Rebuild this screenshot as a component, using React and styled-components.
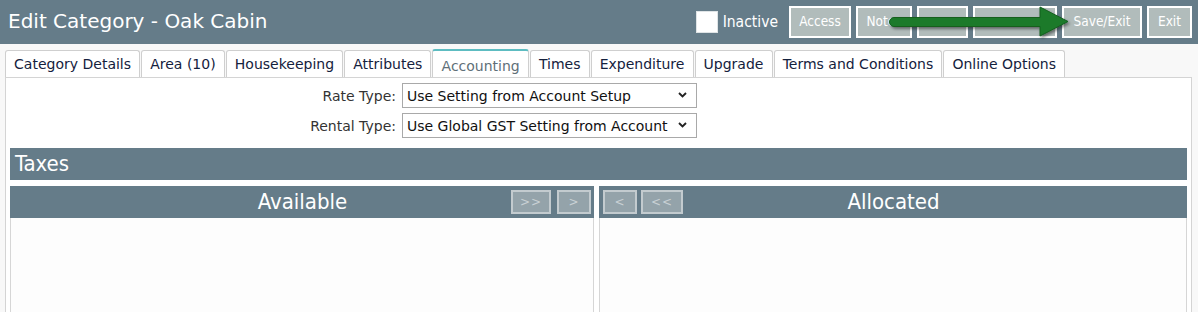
import React from "react";
import styled, { createGlobalStyle } from "styled-components";

const Global = createGlobalStyle`
  html, body { margin: 0; padding: 0; background: #f8f8f8; }
  body { font-family: "DejaVu Sans", Verdana, sans-serif; overflow: hidden; }
  * { box-sizing: border-box; }
`;

const Page = styled.div`
  width: 1198px;
  height: 312px;
  overflow: hidden;
`;

const Header = styled.header`
  position: relative;
  height: 44px;
  background: #657c89;
  display: flex;
  align-items: center;
  padding: 0 6px 0 8px;
`;

const Title = styled.h1`
  flex: 1;
  margin: 0;
  font-size: 20px;
  font-weight: normal;
  color: #fff;
  padding-bottom: 2px;
`;

const CheckLabel = styled.label`
  display: flex;
  align-items: center;
  gap: 5px;
  color: #fff;
  font-family: "DejaVu Sans Condensed", Tahoma, sans-serif;
  font-size: 15.5px;
  margin-right: 11px;
`;

const Box = styled.span`
  width: 22px;
  height: 22px;
  background: #fff;
  border: 1px solid #dfe4e6;
`;

const HeadButtons = styled.div`
  display: flex;
  gap: 5px;
`;

const HeadButton = styled.button`
  width: ${(p) => p.$w}px;
  height: 32px;
  background: #b1bcbb;
  border: 2px solid #fff;
  color: #fff;
  font-family: "DejaVu Sans Condensed", Tahoma, sans-serif;
  font-size: 13.5px;
  padding: 0 0 3px;
`;

const Arrow = styled.svg`
  position: absolute;
  left: 884px;
  top: 4px;
`;

const TabStrip = styled.nav`
  display: flex;
  align-items: flex-end;
  height: 33px;
  padding-left: 5px;
`;

const Tab = styled.div`
  height: ${(p) => (p.$active ? 28 : 27)}px;
  padding: ${(p) => (p.$active ? "7px 8.1px 0" : "5px 8.1px 0")};
  margin-right: 1px;
  background: #fff;
  border: 1px solid #cfcfcf;
  border-bottom: none;
  border-top: ${(p) => (p.$active ? "2px solid #5dbcc1" : "1px solid #cfcfcf")};
  border-radius: 3px 3px 0 0;
  font-size: 14px;
  color: ${(p) => (p.$active ? "#5f6f78" : "#14213d")};
  white-space: nowrap;
`;

const Content = styled.main`
  margin: 0 6px 0 5px;
  background: #fff;
  border: 1px solid #d4d4d4;
  padding: 5px 4px 0;
  height: 240px;
`;

const Form = styled.div`
  display: grid;
  grid-template-columns: 386px 295px;
  column-gap: 6px;
  row-gap: 5px;
  align-items: center;
`;

const Label = styled.span`
  text-align: right;
  font-size: 14px;
  color: #333;
`;

const SelectWrap = styled.div`
  position: relative;
  height: 25px;
`;

const Select = styled.select`
  appearance: none;
  width: 100%;
  height: 25px;
  border: 1px solid #a9a9a9;
  border-radius: 0;
  background: #fff;
  font-family: "DejaVu Sans", Verdana, sans-serif;
  font-size: 14px;
  color: #111;
  padding: 0 25px 0 4px;
`;

const Chevron = styled.svg`
  position: absolute;
  right: 10px;
  top: 9px;
  pointer-events: none;
`;

const SectionBar = styled.div`
  margin-top: 10px;
  height: 32px;
  background: #657c89;
  color: #fff;
  font-family: "DejaVu Sans Condensed", Tahoma, sans-serif;
  font-size: 22px;
  display: flex;
  align-items: center;
  padding: 0 0 2px 5px;
`;

const Columns = styled.div`
  margin-top: 6px;
  display: grid;
  grid-template-columns: 584px 588px;
  column-gap: 5px;
`;

const Panel = styled.section`
  display: flex;
  flex-direction: column;
`;

const PanelHead = styled.div`
  height: 32px;
  background: #657c89;
  display: grid;
  grid-template-columns: 1fr auto 1fr;
  align-items: center;
  padding: 0 3px 0 4px;
`;

const PanelTitle = styled.div`
  grid-column: 2;
  color: #fff;
  font-family: "DejaVu Sans Condensed", Tahoma, sans-serif;
  font-size: 22px;
  padding-bottom: 2px;
`;

const MoveGroup = styled.div`
  grid-column: ${(p) => p.$col};
  grid-row: 1;
  justify-self: ${(p) => (p.$col === 3 ? "end" : "start")};
  display: flex;
  gap: ${(p) => p.$gap}px;
`;

const MoveButton = styled.button`
  width: ${(p) => p.$w}px;
  height: 24px;
  background: #94a3aa;
  border: 2px solid #c3cbcf;
  color: #c9d1d5;
  font-family: "DejaVu Sans", sans-serif;
  font-size: 12px;
  padding: 0;
  letter-spacing: 1px;
`;

const PanelBody = styled.div`
  height: 100px;
  background: #fdfdfd;
  border: 1px solid #d6d6d6;
  border-top: none;
`;

const tabs = [
  "Category Details",
  "Area (10)",
  "Housekeeping",
  "Attributes",
  "Accounting",
  "Times",
  "Expenditure",
  "Upgrade",
  "Terms and Conditions",
  "Online Options",
];

function Dropdown({ value }) {
  return (
    <SelectWrap>
      <Select defaultValue={value}>
        <option>{value}</option>
      </Select>
      <Chevron width="9" height="6" viewBox="0 0 9 6">
        <path d="M1 1l3.5 3.5L8 1" fill="none" stroke="#222" strokeWidth="1.9" />
      </Chevron>
    </SelectWrap>
  );
}

export default function App() {
  return (
    <Page>
      <Global />
      <Header>
        <Title>Edit Category - Oak Cabin</Title>
        <CheckLabel>
          <Box />
          Inactive
        </CheckLabel>
        <HeadButtons>
          <HeadButton $w={62}>Access</HeadButton>
          <HeadButton $w={56}>Notes</HeadButton>
          <HeadButton $w={51}>{"\u00a0"}</HeadButton>
          <HeadButton $w={84}>{"\u00a0"}</HeadButton>
          <HeadButton $w={80}>Save/Exit</HeadButton>
          <HeadButton $w={45}>Exit</HeadButton>
        </HeadButtons>
        <Arrow width="190" height="38" viewBox="0 0 190 38">
          <defs>
            <filter id="sh" x="-10%" y="-30%" width="120%" height="170%">
              <feDropShadow dx="1.5" dy="2" stdDeviation="1.5" floodColor="#000" floodOpacity="0.45" />
            </filter>
          </defs>
          <g filter="url(#sh)">
            <path
              d="M10 13.5 L156 13.5 L156 3 L184 17.5 L156 32 L156 22.5 L10 22.5 A4.5 4.5 0 0 1 10 13.5 Z"
              fill="#1b7a2b"
              stroke="#135e1f"
              strokeWidth="1"
            />
          </g>
        </Arrow>
      </Header>
      <TabStrip>
        {tabs.map((t) => (
          <Tab key={t} $active={t === "Accounting"}>
            {t}
          </Tab>
        ))}
      </TabStrip>
      <Content>
        <Form>
          <Label>Rate Type:</Label>
          <Dropdown value="Use Setting from Account Setup" />
          <Label>Rental Type:</Label>
          <Dropdown value="Use Global GST Setting from Account Setup" />
        </Form>
        <SectionBar>Taxes</SectionBar>
        <Columns>
          <Panel>
            <PanelHead>
              <PanelTitle>Available</PanelTitle>
              <MoveGroup $col={3} $gap={6}>
                <MoveButton $w={40}>&gt;&gt;</MoveButton>
                <MoveButton $w={34}>&gt;</MoveButton>
              </MoveGroup>
            </PanelHead>
            <PanelBody />
          </Panel>
          <Panel>
            <PanelHead>
              <MoveGroup $col={1} $gap={4}>
                <MoveButton $w={34}>&lt;</MoveButton>
                <MoveButton $w={42}>&lt;&lt;</MoveButton>
              </MoveGroup>
              <PanelTitle>Allocated</PanelTitle>
            </PanelHead>
            <PanelBody />
          </Panel>
        </Columns>
      </Content>
    </Page>
  );
}
